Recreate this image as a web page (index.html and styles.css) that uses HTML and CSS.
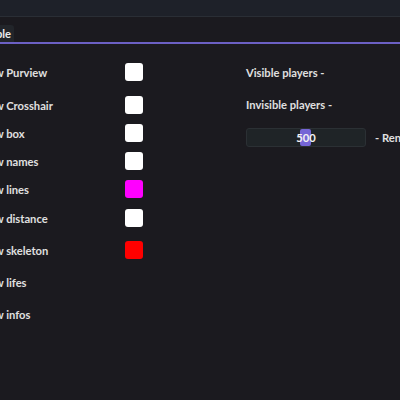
FILE: index.html
```html
<!DOCTYPE html>
<html>
<head>
<meta charset="utf-8">
<link rel="stylesheet" href="styles.css">
</head>
<body>
<div class="topstrip"></div>
<div class="tabbar">
  <div class="tab"><span class="tab-text">Visible</span></div>
</div>
<div class="content">
  <div class="left">
    <div class="row r1"><span class="label">Show Purview</span><span class="cb white"></span></div>
    <div class="row r2"><span class="label">Show Crosshair</span><span class="cb white"></span></div>
    <div class="row r3"><span class="label">Show box</span><span class="cb white"></span></div>
    <div class="row r4"><span class="label">Show names</span><span class="cb white"></span></div>
    <div class="row r5"><span class="label">Show lines</span><span class="cb magenta"></span></div>
    <div class="row r6"><span class="label">Show distance</span><span class="cb white"></span></div>
    <div class="row r7"><span class="label">Show skeleton</span><span class="cb red"></span></div>
    <div class="row r8"><span class="label">Show lifes</span></div>
    <div class="row r9"><span class="label">Show infos</span></div>
  </div>
  <div class="right">
    <div class="rrow q1">Visible players -</div>
    <div class="rrow q2">Invisible players -</div>
    <div class="srow">
      <div class="slider"><span class="grab"></span><span class="sval">500</span></div>
      <span class="slabel">- Render distance</span>
    </div>
  </div>
</div>
</body>
</html>
```

FILE: styles.css
```css
html, body {
  margin: 0;
  padding: 0;
}
body {
  width: 400px;
  height: 400px;
  overflow: hidden;
  background: #1b1a1f;
  font-family: "Lato", "Noto Sans", sans-serif;
  font-weight: 700;
  font-size: 11.2px;
  color: #e0e0e0;
}
.topstrip {
  height: 17px;
  background: #1e2129;
  border-bottom: 1px solid #2a2e35;
  box-sizing: border-box;
}
.tabbar {
  height: 25px;
  display: flex;
  align-items: flex-end;
  border-bottom: 2px solid #6c60c4;
  box-sizing: content-box;
  overflow: hidden;
}
.tab {
  height: 17px;
  width: 14px;
  background: #22252a;
  overflow: hidden;
  display: flex;
  align-items: center;
  justify-content: flex-end;
  border-radius: 0 3px 0 0;
}
.tab-text {
  white-space: nowrap;
  color: #ececec;
  padding-right: 3px;
}
.content {
  display: flex;
  padding-top: 19px;
}
.left {
  display: flex;
  flex-direction: column;
  width: 246px;
  flex: none;
}
.row {
  height: 18px;
  display: flex;
  align-items: center;
  margin-left: -24px;
}
.label {
  width: 149px;
  white-space: nowrap;
  flex: none;
}
.cb {
  width: 18px;
  height: 18px;
  border-radius: 3px;
  flex: none;
}
.white { background: #ffffff; }
.magenta { background: #ff00ff; }
.red { background: #ff0000; }
.r2 { margin-top: 15px; }
.r3, .r4, .r5 { margin-top: 10px; }
.r6 { margin-top: 11px; }
.r7, .r8, .r9 { margin-top: 14px; }
.right {
  display: flex;
  flex-direction: column;
}
.rrow {
  height: 18px;
  display: flex;
  align-items: center;
  white-space: nowrap;
}
.q1 { margin-top: 0; }
.q2 { margin-top: 14px; }
.srow {
  margin-top: 15px;
  display: flex;
  align-items: center;
  white-space: nowrap;
}
.slider {
  position: relative;
  width: 120px;
  height: 19px;
  box-sizing: border-box;
  background: #1f2427;
  border: 1px solid #2b3034;
  border-radius: 3px;
  display: flex;
  align-items: center;
  justify-content: center;
}
.grab {
  position: absolute;
  left: 53px;
  top: 0;
  width: 11px;
  height: 17px;
  background: #7565d6;
  border-radius: 2px;
}
.sval {
  position: relative;
  color: #f2f2f2;
}
.slabel {
  margin-left: 9px;
}
```
